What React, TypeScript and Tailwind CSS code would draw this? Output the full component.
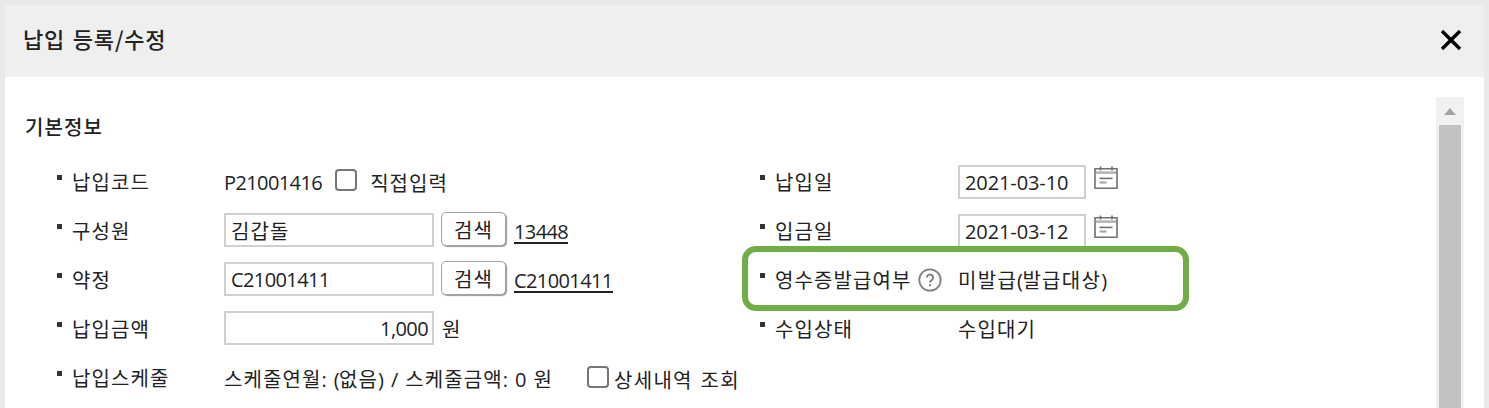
import type { ReactNode } from "react";

interface RowProps {
  label: string;
  help?: boolean;
  children: ReactNode;
}

// Latin letters and digits run narrower than the Hangul around them
function Latin({ children }: { children: ReactNode }) {
  return (
    <span className="font-['Open_Sans','Noto_Sans',sans-serif] text-[20px] tracking-[-0.6px]">
      {children}
    </span>
  );
}

function Label({ label, help }: { label: string; help?: boolean }) {
  return (
    <div className="flex h-full items-center">
      <span className="mr-[10px] mb-[9px] size-[5px] bg-[#333]" />
      <span>{label}</span>
      {help && (
        <svg className="ml-[6px] size-6" viewBox="0 0 24 24" fill="none" stroke="#808080">
          <circle cx="12" cy="12" r="10.7" strokeWidth="1.8" />
          <path d="M8.9 9.6a3.1 3.1 0 1 1 4.9 2.5c-1.2.8-1.8 1.2-1.8 2.5" strokeWidth="2" />
          <path d="M12 16.2v2" strokeWidth="2.1" />
        </svg>
      )}
    </div>
  );
}

function LeftRow({ label, children }: RowProps) {
  return (
    <div className="flex h-[49px] items-center">
      <div className="h-full w-[167px] pt-[2px]">
        <Label label={label} />
      </div>
      {children}
    </div>
  );
}

function RightRow({ label, help, children }: RowProps) {
  return (
    <div className="flex h-[49px] items-center">
      <div className="h-full w-[198px]">
        <Label label={label} help={help} />
      </div>
      {children}
    </div>
  );
}

function Field({ children, className }: { children: ReactNode; className: string }) {
  return (
    <div className={`flex h-[34px] items-center border-2 border-[#d0d0d0] bg-white pt-[2px] ${className}`}>
      {children}
    </div>
  );
}

function SearchButton() {
  return (
    <button className="mb-px ml-[7px] flex h-[34px] w-[65px] items-center justify-center rounded-[5px] border-[1.5px] border-[#a3a3a3] bg-white pt-[2px] shadow-[1px_1px_1px_#999]">
      검색
    </button>
  );
}

function Checkbox({ className }: { className: string }) {
  return <span className={`size-[22px] rounded-[4px] border-2 border-[#767676] bg-white ${className}`} />;
}

function CalendarIcon() {
  return (
    <svg className="mb-[7px] ml-[8px] h-6 w-6" viewBox="0 0 24 24" fill="none" stroke="#707070">
      <path d="M1 2.8h22v19.5H1z" strokeWidth="1.6" />
      <path d="M2 6.6h20" stroke="#b4b4b4" strokeWidth="2.6" />
      <path d="M6.5 .5v4M18 .5v4" strokeWidth="1.6" />
      <path d="M5.5 12.4h13" strokeWidth="1.6" />
      <path d="M5.5 16.5h7" stroke="#a8a8a8" strokeWidth="2.2" />
    </svg>
  );
}

export default function App() {
  return (
    <div className="h-[408px] w-[1489px] overflow-hidden border-x-[5px] border-t-[5px] border-[#e9e9e9] bg-white font-['Noto_Sans_CJK_KR',sans-serif] text-[20px] leading-[30px] tracking-[1.1px] whitespace-nowrap text-[#222] [word-spacing:2px]">
      <header className="flex h-[72px] items-center justify-between bg-[#efefef] pr-[22px] pl-[18px]">
        <h1 className="mb-[6px] text-[22px] font-medium tracking-[0.8px]">납입 등록/수정</h1>
        <svg className="mb-[3px] size-[22px]" viewBox="0 0 22 22" stroke="#000" strokeWidth="3.4">
          <path d="M2 2l18 18M20 2L2 20" />
        </svg>
      </header>
      <main className="flex h-[331px] pr-[20px]">
        <div className="w-[1431px] pt-[35px]">
          <h2 className="h-[44px] pl-[20px] text-[20px] font-medium">기본정보</h2>
          <div className="flex pl-[52px]">
            <div className="w-[703px]">
              <LeftRow label="납입코드">
                <span className="mt-[3px]">
                  <Latin>P21001416</Latin>
                </span>
                <Checkbox className="mr-[13px] mb-[2px] ml-[13px]" />
                <span className="mt-[4px]">직접입력</span>
              </LeftRow>
              <LeftRow label="구성원">
                <Field className="w-[210px] pl-[5px]">김갑돌</Field>
                <SearchButton />
                <span className="mt-[4px] ml-[8px] border-b-2 border-[#222] leading-[21px]">
                  <Latin>13448</Latin>
                </span>
              </LeftRow>
              <LeftRow label="약정">
                <Field className="w-[210px] pl-[5px]">
                  <Latin>C21001411</Latin>
                </Field>
                <SearchButton />
                <span className="mt-[4px] ml-[8px] border-b-2 border-[#222] leading-[21px]">
                  <Latin>C21001411</Latin>
                </span>
              </LeftRow>
              <LeftRow label="납입금액">
                <Field className="w-[210px] justify-end pr-[4px]">
                  <Latin>1,000</Latin>
                </Field>
                <span className="mt-[2px] ml-[8px]">원</span>
              </LeftRow>
              <LeftRow label="납입스케줄">
                <span className="mt-[6px] [word-spacing:3px]">
                  스케줄연월<Latin>: (</Latin>없음<Latin>) / </Latin>스케줄금액<Latin>: 0 </Latin>원
                </span>
                <Checkbox className="mr-[5px] ml-[34px]" />
                <span className="mt-[6px] tracking-[1.3px]">상세내역 조회</span>
              </LeftRow>
            </div>
            <div className="relative pt-px">
              <RightRow label="납입일">
                <Field className="w-[128px] pl-[5px]">
                  <Latin>
                    <span className="tracking-[-0.1px]">2021-03-10</span>
                  </Latin>
                </Field>
                <CalendarIcon />
              </RightRow>
              <RightRow label="입금일">
                <Field className="w-[128px] pl-[5px]">
                  <Latin>
                    <span className="tracking-[-0.1px]">2021-03-12</span>
                  </Latin>
                </Field>
                <CalendarIcon />
              </RightRow>
              <RightRow label="영수증발급여부" help>
                <span className="mt-[2px] tracking-[1.3px]">
                  미발급<Latin>(</Latin>발급대상<Latin>)</Latin>
                </span>
              </RightRow>
              <RightRow label="수입상태">
                <span className="mt-px">수입대기</span>
              </RightRow>
              {/* highlight over the receipt row */}
              <div className="absolute top-[90px] -left-[18px] h-[65px] w-[447px] rounded-[14px] border-6 border-[#70ad47]" />
            </div>
          </div>
        </div>
        <div className="mt-[20px] flex w-[28px] flex-col items-center bg-[#f1f1f1]">
          <svg className="h-[28px] w-[12px]" viewBox="0 0 12 28">
            <path d="M6 11l6 7H0z" fill="#a3a3a3" />
          </svg>
          <div className="w-[22px] flex-1 bg-[#c1c1c1]" />
        </div>
      </main>
    </div>
  );
}
